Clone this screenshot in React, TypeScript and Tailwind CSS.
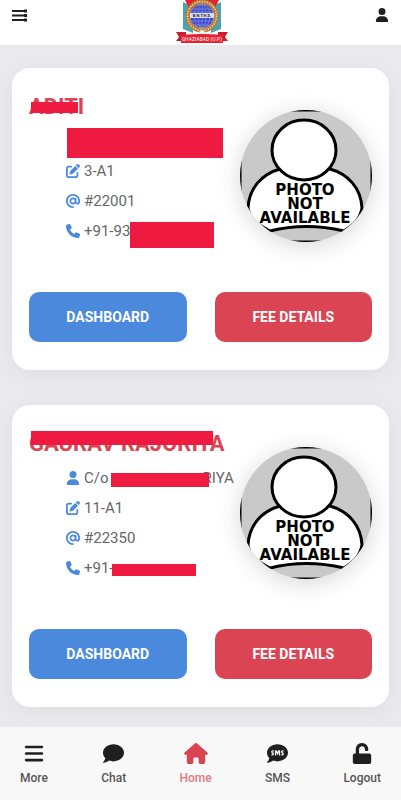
import React from 'react';
import { FaAt, FaBars, FaHouse, FaPenToSquare, FaPhone, FaUser } from 'react-icons/fa6';
import { FaComment, FaSms, FaUnlock } from 'react-icons/fa';

interface Student {
  name: string;
  nameBar: string;
  guardian: React.ReactNode;
  section: string;
  roll: string;
  phone: React.ReactNode;
}

const students: Student[] = [
  {
    name: 'ADITI',
    nameBar: 'left-[2px] top-[10px] w-[47px] h-[11px]',
    guardian: <span className="absolute left-[1px] top-[2px] w-[156px] h-[30px] bg-[#ef1a40]" />,
    section: '3-A1',
    roll: '#22001',
    phone: (
      <span className="flex h-[30px] leading-[30px]">
        +91-93
        <span className="mt-[6px] w-[84px] h-[26px] bg-[#ef1a40]" />
      </span>
    ),
  },
  {
    name: 'GAURAV RAJORIYA',
    nameBar: 'left-[2px] top-[2px] w-[182px] h-[14px]',
    guardian: (
      <span className="flex items-center">
        C/o
        <span className="z-10 ml-[2px] -mr-[6px] mt-1 w-[98px] h-[14px] bg-[#ef1a40]" />
        RIYA
      </span>
    ),
    section: '11-A1',
    roll: '#22350',
    phone: (
      <span className="flex items-center">
        +91-
        <span className="-ml-[2px] mt-1 w-[84px] h-[12px] bg-[#ef1a40]" />
      </span>
    ),
  },
];

const navItems = [
  { label: 'More', icon: FaBars, width: 'w-5' },
  { label: 'Chat', icon: FaComment, width: 'w-[21px]' },
  { label: 'Home', icon: FaHouse, width: 'w-6', active: true },
  { label: 'SMS', icon: FaSms, width: 'w-[21px]' },
  { label: 'Logout', icon: FaUnlock, width: 'w-5' },
];

const SchoolLogo: React.FC = () => (
  <svg width="54" height="44" viewBox="0 0 54 44" role="img" aria-label="School logo">
    <path d="M8 2l10 5v26L8 29zM46 2l-10 5v26l10-4z" fill="#4ba3ae" />
    <path d="M10 0h34l-5 10H15z" fill="#e3232e" />
    <path d="M1 32h10v9H1l3-4zM53 32H43v9h10l-3-4z" fill="#c9202f" />
    <circle cx="27" cy="16" r="14.5" fill="none" stroke="#b77a35" strokeWidth="4" />
    <circle cx="27" cy="16" r="14.5" fill="none" stroke="#f3e2bd" strokeWidth="1.6" strokeDasharray="1.2 1.4" />
    <circle cx="27" cy="16" r="12.2" fill="#3f48c8" stroke="#c98b3d" />
    <g fill="none" stroke="#8d9df0" strokeWidth="0.6">
      <ellipse cx="27" cy="16" rx="4" ry="12" />
      <ellipse cx="27" cy="16" rx="8" ry="12" />
      <path d="M27 4v24M17 9h20M15 12h24M15 21h24M18 25h18" />
    </g>
    <rect x="15" y="13" width="24" height="5" fill="#d9dcf2" />
    <text x="27" y="17" fontSize="4" fontWeight="700" textAnchor="middle" fill="#1c1c44">B.N.T.H.S.</text>
    <path d="M27 29l1 2.300 2.500.2-1.900 1.600.6 2.500-2.200-1.300-2.200 1.300.6-2.500-1.900-1.600 2.500-.2z" fill="#fff6dc" />
    <path d="M6 35q21-2 42 0v8H6z" fill="#e8202f" />
    <text x="27" y="41" fontSize="5" textAnchor="middle" fill="#fff">GHAZIABAD (U.P.)</text>
  </svg>
);

const Photo: React.FC = () => (
  <svg
    viewBox="0 0 132 132"
    role="img"
    aria-label="Photo not available"
    className="mt-[18px] w-[132px] h-[132px] shrink-0 rounded-full shadow-[0_4px_24px_rgba(0,0,0,0.16)]"
  >
    <rect width="132" height="132" fill="#c9c9c9" stroke="#000" strokeWidth="3" />
    <path
      d="M30 121C20 116 10 110 8 98C9 78 22 64 40 59H90C108 64 121 78 122 98C120 110 112 116 104 121Q66 112 30 121Z"
      fill="#fff"
      stroke="#000"
      strokeWidth="3"
    />
    <ellipse cx="64" cy="40" rx="32" ry="30" fill="#fff" stroke="#000" strokeWidth="3" />
    <g fontFamily="DejaVu Sans, sans-serif" fontWeight="700" fontSize="15" textAnchor="middle">
      <text x="65" y="85">PHOTO</text>
      <text x="65" y="99">NOT</text>
      <text x="65" y="113">AVAILABLE</text>
    </g>
  </svg>
);

const StudentCard: React.FC<{ student: Student }> = ({ student }) => (
  <article className="rounded-[18px] bg-white px-[17px] pt-6 pb-7 shadow-[0_4px_20px_rgba(0,0,0,0.05)]">
    <div className="flex">
      <div className="min-w-0 flex-1">
        <h2 className="relative w-fit whitespace-nowrap text-[22px] leading-[30px] font-bold text-[#da4453]">
          {student.name}
          <span className={`absolute bg-[#ef1a40] ${student.nameBar}`} />
        </h2>
        <ul className="mt-1 ml-[37px] text-[15px] text-[#666] whitespace-nowrap">
          <li className="relative flex h-[30px] items-center gap-1">
            <FaUser size={14} className="shrink-0 text-[#4a89dc]" />
            {student.guardian}
          </li>
          <li className="flex h-[30px] items-center gap-1">
            <FaPenToSquare size={14} className="shrink-0 text-[#4a89dc]" />
            {student.section}
          </li>
          <li className="flex h-[30px] items-center gap-1">
            <FaAt size={14} className="shrink-0 text-[#4a89dc]" />
            {student.roll}
          </li>
          <li className="flex h-[30px] items-center gap-1">
            <FaPhone size={14} className="shrink-0 text-[#4a89dc]" />
            {student.phone}
          </li>
        </ul>
      </div>
      <Photo />
    </div>

    <div className="mt-[46px] grid grid-cols-2 gap-7">
      <button className="h-[50px] rounded-[10px] bg-[#4a89dc] text-sm font-bold text-white">DASHBOARD</button>
      <button className="h-[50px] rounded-[10px] bg-[#da4453] text-sm font-bold text-white">FEE DETAILS</button>
    </div>
  </article>
);

const App: React.FC = () => (
  <div className="flex min-h-screen flex-col bg-[#eae9ee] font-[Roboto,sans-serif]">
    <header className="flex h-[45px] items-start justify-between bg-white px-3 text-[#1f1f1f]">
      <button aria-label="Menu" className="mt-[9px]">
        <svg width="16" height="13" viewBox="0 0 16 13" stroke="currentColor">
          <path d="M0 2h12M0 6.500h12M0 11h12" strokeWidth="1.800" />
          <path d="M12 2h3M12 6.500h3M12 11h3" strokeWidth="2.800" />
        </svg>
      </button>
      <SchoolLogo />
      <button aria-label="Profile" className="mt-2">
        <FaUser size={14} />
      </button>
    </header>

    <main className="flex flex-1 flex-col gap-[35px] px-3 pt-[23px] pb-5">
      {students.map((s) => (
        <StudentCard key={s.name} student={s} />
      ))}
    </main>

    <nav className="sticky bottom-0 flex justify-between bg-[#f8f8f8] px-5 pt-4 pb-[14px]">
      {navItems.map(({ label, icon: Icon, width, active }) => (
        <a
          key={label}
          href="#"
          className={`flex flex-col items-center gap-[6px] text-xs font-medium ${active ? 'text-[#e07884]' : 'text-[#555]'}`}
        >
          <Icon className={`h-[21px] ${width} ${active ? 'text-[#da4453]' : 'text-[#1f1f1f]'}`} />
          {label}
        </a>
      ))}
    </nav>
  </div>
);

export default App;
